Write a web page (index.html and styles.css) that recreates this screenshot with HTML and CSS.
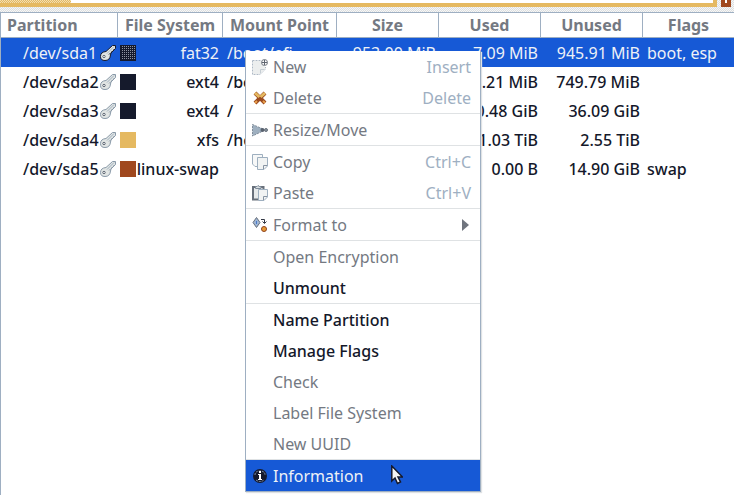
FILE: index.html
```html
<!DOCTYPE html>
<html lang="en">
<head>
<meta charset="utf-8">
<title>Partitions</title>
<link rel="stylesheet" href="styles.css">
</head>
<body>
<svg class="defs" aria-hidden="true">
  <symbol id="key" viewBox="0 0 16 16">
    <path d="M12.500 .5H15.500V3.500L11 8 10.500 10Q10 15.500 5 15.500 .5 15.500 .5 11.500 .5 7 6 6.500Z" fill="#e1e5e4" stroke="var(--edge)"/>
    <path d="M9 9.500 15 3.500" stroke="var(--edge)" stroke-dasharray="2 1"/>
    <path d="M7 8.500 14 1.500" stroke="#9eafbf"/>
    <circle cx="4" cy="11.500" r="1.200" fill="#fff" stroke="#59626f"/>
  </symbol>
</svg>
<header class="disk">
  <div class="bar"><div class="bar-used"></div></div>
  <div class="swap"></div>
</header>
<main>
  <table>
    <colgroup><col class="c-part"><col class="c-fs"><col class="c-mount"><col class="c-num"><col class="c-num"><col class="c-num"><col></colgroup>
    <thead>
      <tr><th class="first">Partition</th><th>File System</th><th>Mount Point</th><th>Size</th><th>Used</th><th>Unused</th><th>Flags</th></tr>
    </thead>
    <tbody>
      <tr class="selected"><td><div class="part">/dev/sda1<svg class="icon"><use href="#key"/></svg></div></td><td><div class="fs"><i class="swatch dotted"></i>fat32</div></td><td>/boot/efi</td><td class="num">953.00 MiB</td><td class="num">7.09 MiB</td><td class="num">945.91 MiB</td><td>boot, esp</td></tr>
      <tr><td><div class="part">/dev/sda2<svg class="icon"><use href="#key"/></svg></div></td><td><div class="fs"><i class="swatch"></i>ext4</div></td><td>/boot</td><td></td><td class="num">4.21 MiB</td><td class="num">749.79 MiB</td><td></td></tr>
      <tr><td><div class="part">/dev/sda3<svg class="icon"><use href="#key"/></svg></div></td><td><div class="fs"><i class="swatch"></i>ext4</div></td><td>/</td><td></td><td class="num">0.48 GiB</td><td class="num">36.09 GiB</td><td></td></tr>
      <tr><td><div class="part">/dev/sda4<svg class="icon"><use href="#key"/></svg></div></td><td><div class="fs"><i class="swatch gold"></i>xfs</div></td><td>/home</td><td></td><td class="num">1.03 TiB</td><td class="num">2.55 TiB</td><td></td></tr>
      <tr><td><div class="part">/dev/sda5<svg class="icon"><use href="#key"/></svg></div></td><td><div class="fs"><i class="swatch rust"></i>linux-swap</div></td><td></td><td></td><td class="num">0.00 B</td><td class="num">14.90 GiB</td><td>swap</td></tr>
    </tbody>
  </table>
</main>
<div class="menu" role="menu">
  <button role="menuitem" disabled>
    <svg class="icon" viewBox="0 0 16 16"><path d="M.5 1.500H9M.5 1.500V15.500H8L13.500 10V8" fill="none" stroke="#aeb9c5" stroke-dasharray="2 1"/><path d="M1 2H9L13 8V10L8 15H1Z" fill="#eceeee"/><path d="M8.500 14.500V10.500H12.500" fill="none" stroke="#c5cdd3"/><circle cx="12.500" cy="3.500" r="3" fill="#fff" stroke="#707680"/><path d="M12.500 1V6M10 3.500H15" stroke="#5f6570"/></svg>
    <span>New</span><kbd>Insert</kbd></button>
  <button role="menuitem" disabled>
    <svg class="icon" viewBox="0 0 16 16"><path d="M3 3 13 13M13 3 3 13" stroke="#9a4a20" stroke-width="4"/><path d="M3 3 7.500 7M13 3 8.500 7" stroke="#e5b961" stroke-width="3"/><path d="M5 11 3 13M11 11 13 13" stroke="#e9a04b" stroke-width="2"/></svg>
    <span>Delete</span><kbd>Delete</kbd></button>
  <hr>
  <button role="menuitem" disabled>
    <svg class="icon" viewBox="0 0 16 16"><path d="M.5 2.500 11 7V9L.5 14Z" fill="#9eafbf" stroke="#7f8b99" stroke-dasharray="2 1"/><circle cx="10.500" cy="8" r="2" fill="#59626f"/><circle cx="14" cy="8" r="1.500" fill="#87919c" stroke="#69717c"/></svg>
    <span>Resize/Move</span></button>
  <hr>
  <button role="menuitem" disabled>
    <svg class="icon" viewBox="0 0 16 16"><path d="M.5 .5H10.500V12.500H3L.5 10Z" fill="#f7f8f8" stroke="#9eafbf"/><path d="M5.500 3.500H15.500V12L12 15.500H5.500Z" fill="#f1f3f3" stroke="#9eafbf"/><path d="M11.500 15V11.500H15" fill="none" stroke="#8793a2"/></svg>
    <span>Copy</span><kbd>Ctrl+C</kbd></button>
  <button role="menuitem" disabled>
    <svg class="icon" viewBox="0 0 16 16"><path d="M11.500 4V2H1V14.500H7" fill="#e7eaeb" stroke="#68707b" stroke-width="2"/><path d="M3.500 3.500V1.500H5L6 .5 7.500 1.500H9V3.500Z" fill="#d7dde1" stroke="#7f8b99"/><path d="M6.500 4.500H15.500V12L12 15.500H6.500Z" fill="#f1f3f3" stroke="#9eafbf"/><path d="M11.500 15V11.500H15" fill="none" stroke="#8793a2"/></svg>
    <span>Paste</span><kbd>Ctrl+V</kbd></button>
  <hr>
  <button role="menuitem" disabled>
    <svg class="icon" viewBox="0 0 16 16"><path d="M4.500 .5 8 5.500 4.500 10.500 1 5.500Z" fill="#9eb5d4" stroke="#68707b"/><path d="M4.500 4V7" stroke="#4c7bc8"/><path d="M9 2.500H12.500V6M10.500 4.500 12.500 6.500 14.500 4.500" fill="none" stroke="#333844"/><circle cx="12" cy="12" r="2.500" fill="#e89b36" stroke="#8e421d"/></svg>
    <span>Format to</span><svg class="arrow" viewBox="0 0 7 12"><path d="M0 0 7 6 0 12Z" fill="#70757e"/></svg></button>
  <hr>
  <button role="menuitem" disabled><span>Open Encryption</span></button>
  <button role="menuitem"><span>Unmount</span></button>
  <hr>
  <button role="menuitem"><span>Name Partition</span></button>
  <button role="menuitem"><span>Manage Flags</span></button>
  <button role="menuitem" disabled><span>Check</span></button>
  <button role="menuitem" disabled><span>Label File System</span></button>
  <button role="menuitem" disabled><span>New UUID</span></button>
  <hr>
  <button role="menuitem" class="active">
    <svg class="icon" viewBox="0 0 16 16"><circle cx="8" cy="8" r="7" fill="#15192b"/><path d="M3 7Q3 3 8 3T13 7M4 12Q8 15 12 12" stroke="#7e91ae" stroke-dasharray="2 1" fill="none"/><path d="M7 3H9V5H7ZM6 6H9V11H10V12H6V11H7V7H6Z" fill="#fff"/></svg>
    <span>Information</span></button>
</div>
<svg class="pointer" viewBox="0 0 12 20" aria-hidden="true"><path d="M.8 1V16L4 13 6.500 18.500 9.500 17 7 12H11.500Z" fill="#f3f4f4" stroke="#15192b" stroke-width="1.500"/></svg>
</body>
</html>
```
FILE: styles.css
```css
:root {
  --blue: #1659d6;
  --ink: #14182a;
  --muted: #747982;
  --line: #9eafc2;
  --gold: #e5b961;
  --rust: #a0481e;
}

* { box-sizing: border-box; }

body {
  margin: 0;
  height: 100vh;
  overflow: hidden;
  display: flex;
  flex-direction: column;
  background: #fff;
  color: var(--ink);
  font: 500 16px/24px "Noto Sans", sans-serif;
}

.defs { position: absolute; width: 0; height: 0; }

.disk {
  display: flex;
  gap: 4px;
  padding: 0 3px 5px 0;
  background: repeating-conic-gradient(#dcdfe0 0 25%, #f7f7f7 0 50%) 0 0 / 2px 2px;
}

.bar {
  flex: 1;
  height: 7px;
  border: solid var(--gold);
  border-width: 0 4px 4px 0;
  background: #fff;
}

.bar-used {
  width: 10%;
  height: 3px;
  background: repeating-conic-gradient(var(--gold) 0 25%, #f2dfb4 0 50%) 0 0 / 2px 2px;
}

.swap {
  width: 10px;
  height: 7px;
  border: solid var(--rust);
  border-width: 0 4px 4px;
  background: #fff;
}

main {
  flex: 1;
  border: solid var(--line);
  border-width: 1px 0 0 1px;
}

table {
  width: 100%;
  table-layout: fixed;
  border-collapse: separate;
  border-spacing: 0;
}

.c-part { width: 117px; }
.c-fs { width: 105px; }
.c-mount { width: 114px; }
.c-num { width: 102px; }

th {
  height: 25px;
  padding: 0;
  border: solid var(--line);
  border-width: 0 1px 1px 0;
  color: var(--muted);
  white-space: nowrap;
}

th.first { padding-left: 6px; text-align: left; }
th:last-child { border-right: 0; }

td {
  height: 29px;
  padding: 0 4px;
  white-space: nowrap;
}

td:first-child { padding: 0 2px 0 22px; }
td:nth-child(2) { padding: 0 4px 0 2px; }
.num { padding: 0 3px; text-align: right; }

.part, .fs {
  display: flex;
  align-items: center;
  justify-content: space-between;
}

.icon { width: 16px; height: 16px; flex: none; --edge: #8999a8; }

.swatch { width: 16px; height: 16px; background: #151a2c; }
.swatch.dotted { background: conic-gradient(#8e93a0 25%, #151a2c 0) 0 0 / 2px 2px; border: 1px solid #151a2c; }
.swatch.gold { background: var(--gold); }
.swatch.rust { background: var(--rust); }

.selected { background: var(--blue); color: #eef1f6; font-weight: 400; }
.selected .icon { --edge: #15192b; }

.menu {
  position: absolute;
  top: 51px;
  left: 245px;
  width: 236px;
  border: solid var(--line);
  border-width: 0 1px 1px;
  background: #fff;
  box-shadow: 1px 1px 1px #dfe2e4;
}

.menu button {
  display: flex;
  align-items: center;
  width: 100%;
  height: 31px;
  padding: 0 9px 0 6px;
  border: 0;
  background: none;
  color: var(--ink);
  font: inherit;
  text-align: left;
}

.menu button:disabled { color: var(--muted); font-weight: 400; }
.menu .icon + span { margin-left: 5px; }
.menu span:first-child { margin-left: 21px; }
.menu span { flex: 1; }
.menu kbd { font: inherit; color: var(--line); }
.menu .arrow { width: 7px; height: 12px; margin-right: 2px; }

.menu .active { background: var(--blue); color: #eef1f6; font-weight: 400; }

.menu hr {
  height: 1px;
  margin: 0;
  border: 0;
  background: #dfe2e4;
}

.pointer {
  position: absolute;
  top: 465px;
  left: 391px;
  width: 12px;
  height: 20px;
}
```
